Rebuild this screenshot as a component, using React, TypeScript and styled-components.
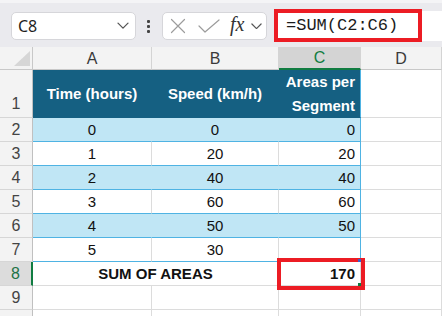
import styled, { createGlobalStyle } from "styled-components";

const GlobalStyle = createGlobalStyle`
  html, body {
    margin: 0;
    padding: 0;
    background: #ffffff;
    font-family: "Liberation Sans", Arial, sans-serif;
  }
`;

const Window = styled.div`
  width: 442px;
  height: 316px;
  overflow: hidden;
  background: #ffffff;
`;

const Toolbar = styled.div`
  height: 44px;
  border-top: 3px solid #f4f4f6;
  background: #eaeaee;
  display: flex;
  align-items: center;
`;

const Pill = styled.div<{ $width: number }>`
  width: ${(p) => p.$width}px;
  height: 28px;
  box-sizing: border-box;
  background: #ffffff;
  border: 1px solid #d6d6da;
  border-radius: 5px;
  display: flex;
  align-items: center;
`;

const NameBox = styled(Pill)`
  margin-left: 11px;
  margin-top: 2px;
  padding: 0 6px;
  justify-content: space-between;
  font-family: "Noto Sans", "Liberation Sans", sans-serif;
  font-size: 16px;
  color: #1f1f1f;
`;

const Dots = styled.div`
  margin: 2px 12px 0 11px;
  display: flex;
  flex-direction: column;
  gap: 2px;
  & > span {
    width: 3px;
    height: 3px;
    border-radius: 1px;
    background: #444;
  }
`;

const FxBox = styled(Pill)`
  margin-top: 2px;
  padding-left: 5px;
`;

const Fx = styled.span`
  font-family: "Liberation Serif", "Times New Roman", serif;
  font-style: italic;
  font-size: 20px;
  color: #333;
  margin: -3px 7px 0 10px;
`;

const FormulaBar = styled.div`
  flex: 1;
  height: 30px;
  margin-left: 7px;
  margin-top: 2px;
  background: #ffffff;
  display: flex;
  align-items: center;
`;

const Highlight = styled.div`
  width: 148px;
  height: 33px;
  box-sizing: border-box;
  border: 4px solid #ec1c24;
  margin-top: -2px;
  padding-left: 8px;
  display: flex;
  align-items: center;
  font-family: "Liberation Mono", "Courier New", monospace;
  font-size: 17px;
  color: #1b1b1b;
`;

const Sheet = styled.div`
  display: grid;
  grid-template-columns: 33px 119px 127px 82px 1fr;
  grid-template-rows: 23px 48px repeat(9, 24px);
  font-family: "Liberation Sans", Arial, sans-serif;
`;

const Corner = styled.div`
  background: #f3f3f3;
  border-right: 1px solid #c8c8c8;
  border-bottom: 1px solid #c8c8c8;
  box-sizing: border-box;
  display: flex;
  align-items: flex-end;
  justify-content: flex-end;
  padding: 0 2px 3px 0;
`;

const ColHead = styled.div<{ $active?: boolean }>`
  background: ${(p) => (p.$active ? "#d4d4d4" : "#f3f3f3")};
  color: ${(p) => (p.$active ? "#107c41" : "#3a3a3a")};
  border-right: 1px solid #d4d4d4;
  border-bottom: ${(p) => (p.$active ? "2px solid #107c41" : "1px solid #c8c8c8")};
  box-sizing: border-box;
  display: flex;
  align-items: center;
  justify-content: center;
  font-size: 16px;
  padding-top: 1px;
`;

const RowHead = styled.div<{ $active?: boolean; $tall?: boolean }>`
  background: ${(p) => (p.$active ? "#dcdcdc" : "#f3f3f3")};
  color: ${(p) => (p.$active ? "#217346" : "#444444")};
  border-right: ${(p) => (p.$active ? "2px solid #107c41" : "1px solid #c0c0c0")};
  border-bottom: 1px solid #d6d6d6;
  box-sizing: border-box;
  display: flex;
  align-items: ${(p) => (p.$tall ? "flex-end" : "center")};
  justify-content: center;
  padding-bottom: ${(p) => (p.$tall ? "4px" : "0")};
  font-size: 16px;
`;

type Tone = "head" | "band" | "plain" | "free";

const Cell = styled.div<{
  $tone: Tone;
  $align?: "left" | "center" | "right";
  $edge?: boolean;
  $span?: number;
  $bold?: boolean;
}>`
  grid-column: span ${(p) => p.$span ?? 1};
  position: relative;
  box-sizing: border-box;
  display: flex;
  align-items: center;
  justify-content: ${(p) =>
    p.$align === "right" ? "flex-end" : p.$align === "center" ? "center" : "flex-start"};
  text-align: ${(p) => p.$align ?? "left"};
  padding: 0 5px;
  font-size: 15px;
  font-weight: ${(p) => (p.$bold || p.$tone === "head" ? 700 : 400)};
  line-height: 24px;
  color: ${(p) => (p.$tone === "head" ? "#ffffff" : "#111111")};
  background: ${(p) =>
    p.$tone === "head" ? "#156082" : p.$tone === "band" ? "#c0e6f5" : "#ffffff"};
  border-right: 1px solid
    ${(p) =>
      p.$edge
        ? "#4fb3e3"
        : p.$tone === "head"
          ? "#156082"
          : p.$tone === "band"
            ? "#c0e6f5"
            : "#dcdcdc"};
  border-bottom: 1px solid
    ${(p) =>
      p.$tone === "free" ? "#dcdcdc" : p.$tone === "head" ? "#156082" : "#4fb3e3"};
`;

const SumMark = styled.div`
  position: absolute;
  z-index: 2;
  left: -2px;
  top: -4px;
  right: -5px;
  bottom: -5px;
  border: 4px solid #ec1c24;
  pointer-events: none;
`;

const Handle = styled.span<{ $color: string }>`
  position: absolute;
  z-index: 3;
  right: -1px;
  bottom: -1px;
  width: 3px;
  height: 3px;
  background: ${(p) => p.$color};
`;

const Chevron = ({ size = 12 }: { size?: number }) => (
  <svg width={size} height={size * 0.6} viewBox="0 0 12 7" fill="none">
    <path d="M1 1l5 5 5-5" stroke="#555" strokeWidth="1.3" strokeLinecap="round" strokeLinejoin="round" />
  </svg>
);

const CrossIcon = () => (
  <svg width="16" height="16" viewBox="0 0 16 16" fill="none" style={{ marginLeft: 2 }}>
    <path d="M1.5 1.5l13 13M14.5 1.5l-13 13" stroke="#9c9c9c" strokeWidth="1.2" strokeLinecap="round" />
  </svg>
);

const CheckIcon = () => (
  <svg width="22" height="14" viewBox="0 0 22 14" fill="none" style={{ marginLeft: 12 }}>
    <path d="M1 7l6 6L21 1" stroke="#9c9c9c" strokeWidth="1.2" strokeLinecap="round" strokeLinejoin="round" />
  </svg>
);

const rows: [number, number, number | ""][] = [
  [0, 0, 0],
  [1, 20, 20],
  [2, 40, 40],
  [3, 60, 60],
  [4, 50, 50],
  [5, 30, ""],
];

const App = () => {
  return (
    <Window>
      <GlobalStyle />
      <Toolbar>
        <NameBox $width={125}>
          <span>C8</span>
          <Chevron />
        </NameBox>
        <Dots>
          <span />
          <span />
          <span />
        </Dots>
        <FxBox $width={105}>
          <CrossIcon />
          <CheckIcon />
          <Fx>fx</Fx>
          <Chevron size={11} />
        </FxBox>
        <FormulaBar>
          <Highlight>=SUM(C2:C6)</Highlight>
        </FormulaBar>
      </Toolbar>

      <Sheet>
        <Corner>
          <svg width="16" height="15" viewBox="0 0 16 15">
            <path d="M16 0V15H0Z" fill="#d6d6d6" />
          </svg>
        </Corner>
        <ColHead>A</ColHead>
        <ColHead>B</ColHead>
        <ColHead $active>C</ColHead>
        <ColHead>D</ColHead>

        <RowHead $tall>1</RowHead>
        <Cell $tone="head" $align="center">Time (hours)</Cell>
        <Cell $tone="head" $align="center">Speed (km/h)</Cell>
        <Cell $tone="head" $align="right" $edge>
          Areas per
          <br />
          Segment
        </Cell>
        <Cell $tone="free" />

        {rows.map((r, i) => {
          const tone: Tone = i % 2 === 0 ? "band" : "plain";
          const last = i === rows.length - 1;
          return [
            <RowHead key={`h${i}`}>{i + 2}</RowHead>,
            <Cell key={`a${i}`} $tone={tone} $align="center">{r[0]}</Cell>,
            <Cell key={`b${i}`} $tone={tone} $align="center">{r[1]}</Cell>,
            <Cell key={`c${i}`} $tone={tone} $align="right" $edge>
              {r[2]}
              {last && <Handle $color="#3d5ccc" />}
            </Cell>,
            <Cell key={`d${i}`} $tone="free" />,
          ];
        })}

        <RowHead $active>8</RowHead>
        <Cell $tone="free" $align="center" $span={2} $bold>SUM OF AREAS</Cell>
        <Cell $tone="free" $align="right" $bold>
          170
          <SumMark />
          <Handle $color="#107c41" />
        </Cell>
        <Cell $tone="free" />

        <RowHead>9</RowHead>
        <Cell $tone="free" />
        <Cell $tone="free" />
        <Cell $tone="free" />
        <Cell $tone="free" />

        <RowHead />
        <Cell $tone="free" />
        <Cell $tone="free" />
        <Cell $tone="free" />
        <Cell $tone="free" />
      </Sheet>
    </Window>
  );
};

export default App;
